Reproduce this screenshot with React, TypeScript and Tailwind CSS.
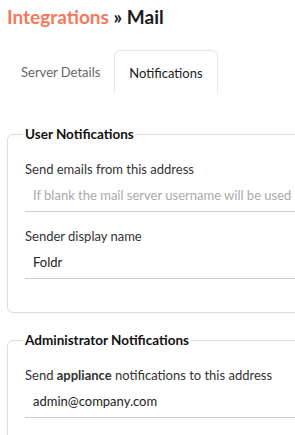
import React from "react";

function Field({ label, value, placeholder, first }: { label: React.ReactNode; value?: string; placeholder?: string; first?: boolean }) {
  return (
    <div className={first ? "mt-[17px]" : "mt-[15px]"}>
      <label className="block text-[13px] leading-[18px] text-[#333]">{label}</label>
      <div className="mt-[8px] border-b border-[#cfcfcf] px-2 pb-[7px] text-[13px] leading-[18px]">
        {value ? (
          <span className="text-[#222]">{value}</span>
        ) : (
          <span className="text-[#aaa]">{placeholder}</span>
        )}
      </div>
    </div>
  );
}

function Section({ title, children, className = "" }: { title: string; children: React.ReactNode; className?: string }) {
  return (
    <fieldset className={`w-[320px] rounded-md border border-[#dcdcdc] pl-[17px] ${className}`}>
      <legend className="-ml-[2px] px-[2px] text-[13.5px] font-bold leading-[18px] text-[#111]">{title}</legend>
      {children}
    </fieldset>
  );
}

export default function App() {
  return (
    <div
      className="h-[435px] w-[295px] overflow-hidden bg-white"
      style={{ fontFamily: 'Lato, "Noto Sans", sans-serif' }}
    >
      <div className="px-[7px] pt-[4px]">
        <h1 className="text-[19px] font-bold leading-[26px]">
          <span className="text-[#f4795b]">Integrations</span>
          <span className="text-[#1a1a1a]"> » Mail</span>
        </h1>

        {/* Tabs */}
        <div className="mt-[20px] flex h-[43px] items-stretch">
          <div className="flex items-center px-[14px] pt-[3px] text-[13px] text-[#666]">Server Details</div>
          <div className="flex items-center rounded-t-md border border-b-0 border-[#e6e6e6] px-[14px] pt-[3px] text-[13px] text-[#1a1a1a]">
            Notifications
          </div>
        </div>

        <Section title="User Notifications" className="mt-[32px] pb-[33px]">
          <Field first label="Send emails from this address" placeholder="If blank the mail server username will be used" />
          <Field label="Sender display name" value="Foldr" />
        </Section>

        <Section title="Administrator Notifications" className="mt-[18px] pb-[32px]">
          <Field
            first
            label={
              <>
                Send <b className="font-bold">appliance</b> notifications to this address
              </>
            }
            value="admin@company.com"
          />
        </Section>
      </div>
    </div>
  );
}
